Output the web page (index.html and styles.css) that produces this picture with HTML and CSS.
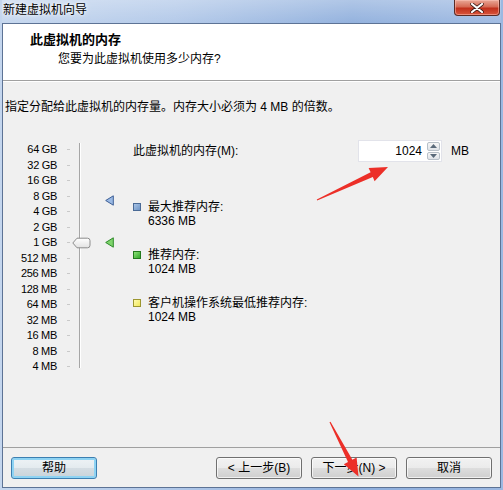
FILE: index.html
```html
<!DOCTYPE html>
<html lang="zh-CN">
  <head>
    <meta charset="UTF-8" />
    <title>新建虚拟机向导</title>
    <link rel="stylesheet" href="styles.css">
  </head>
  <body>
    <div class="window">
      <div class="titlebar">
        <span class="title">新建虚拟机向导</span>
        <div class="close">
          <svg width="14" height="10" viewBox="0 0 14 10">
            <path d="M2 1 L12 9 M12 1 L2 9" stroke="#3a1a16" stroke-width="3.6" stroke-linecap="round" />
            <path d="M2 1 L12 9 M12 1 L2 9" stroke="#fff" stroke-width="2.2" stroke-linecap="round" />
          </svg>
        </div>
      </div>

      <div class="client">
        <div class="header">
          <div class="header-title">此虚拟机的内存</div>
          <div class="header-sub">您要为此虚拟机使用多少内存?</div>
        </div>

        <div class="content">
          <p class="intro">指定分配给此虚拟机的内存量。内存大小必须为 4 MB 的倍数。</p>

          <div class="main">
            <div class="scale">
              <div class="labels">
                <div>64 GB</div>
                <div>32 GB</div>
                <div>16 GB</div>
                <div>8 GB</div>
                <div>4 GB</div>
                <div>2 GB</div>
                <div>1 GB</div>
                <div>512 MB</div>
                <div>256 MB</div>
                <div>128 MB</div>
                <div>64 MB</div>
                <div>32 MB</div>
                <div>16 MB</div>
                <div>8 MB</div>
                <div>4 MB</div>
              </div>
              <div class="track">
                <div class="ticks">
                  <div></div><div></div><div></div><div></div><div></div>
                  <div></div><div></div><div></div><div></div><div></div>
                  <div></div><div></div><div></div><div></div><div></div>
                </div>
                <div class="rail"></div>

                <svg class="thumb" width="19" height="12" viewBox="0 0 19 12">
                  <defs>
                    <linearGradient id="thumbFill" x1="0" y1="0" x2="0" y2="1">
                      <stop offset="0" stop-color="#ffffff" />
                      <stop offset="1" stop-color="#e2e2e2" />
                    </linearGradient>
                  </defs>
                  <path d="M0.8 6 L5 1.2 H15.5 Q18 1.2 18 3.7 V8.3 Q18 10.8 15.5 10.8 H5 Z" fill="url(#thumbFill)" stroke="#8c8c8c" />
                </svg>

                <svg class="marker marker-max" width="9" height="11" viewBox="0 0 9 11">
                  <path d="M0.7 5.5 L8.3 0.8 V10.2 Z" fill="#9ab9e4" stroke="#3e5f95" />
                </svg>
                <svg class="marker marker-rec" width="9" height="11" viewBox="0 0 9 11">
                  <path d="M0.7 5.5 L8.3 0.8 V10.2 Z" fill="#7fd46c" stroke="#2e8a2a" />
                </svg>
              </div>
            </div>

            <div class="info">
              <div class="mem-row">
                <span class="mem-label">此虚拟机的内存(M):</span>
                <div class="spin">
                  <span class="spin-value">1024</span>
                  <div class="spin-buttons">
                    <div class="spin-btn">
                      <svg width="7" height="4" viewBox="0 0 7 4"><path d="M0 4 L3.5 0 L7 4 Z" fill="#5a6a7a" /></svg>
                    </div>
                    <div class="spin-btn">
                      <svg width="7" height="4" viewBox="0 0 7 4"><path d="M0 0 L3.5 4 L7 0 Z" fill="#5a6a7a" /></svg>
                    </div>
                  </div>
                </div>
                <span class="unit">MB</span>
              </div>

              <div class="legend">
                <div class="legend-item">
                  <span class="swatch swatch-blue"></span>
                  <div>
                    <div>最大推荐内存:</div>
                    <div>6336 MB</div>
                  </div>
                </div>
                <div class="legend-item">
                  <span class="swatch swatch-green"></span>
                  <div>
                    <div>推荐内存:</div>
                    <div>1024 MB</div>
                  </div>
                </div>
                <div class="legend-item">
                  <span class="swatch swatch-yellow"></span>
                  <div>
                    <div>客户机操作系统最低推荐内存:</div>
                    <div>1024 MB</div>
                  </div>
                </div>
              </div>
            </div>
          </div>
        </div>

        <div class="footer">
          <button class="btn btn-default">帮助</button>
          <div class="footer-nav">
            <button class="btn">&lt; 上一步(B)</button>
            <button class="btn">下一步(N) &gt;</button>
            <button class="btn">取消</button>
          </div>
        </div>
      </div>

      <!-- red annotation arrows drawn over the dialog -->
      <svg class="annotations" width="503" height="490" viewBox="0 0 503 490">
        <polygon points="317.2,200.6 372.8,176.9 374.6,181.2 388,167 368.6,168.1 370.6,172.3 316.8,199.4" fill="#ec2f28" />
        <polygon points="329.5,422.2 348.0,462.1 343.8,464.3 358.5,476.5 356.6,457.5 352.4,459.8 330.5,421.8" fill="#ec2f28" />
      </svg>
    </div>
  </body>
</html>
```

FILE: styles.css
```css
* {
  box-sizing: border-box;
}

body {
  margin: 0;
  font-family: "Liberation Sans", "Noto Sans CJK SC", sans-serif;
  font-size: 12px;
  line-height: 16px;
  color: #000;
  background: #fff;
}

.window {
  position: relative;
  width: 503px;
  height: 490px;
  display: flex;
  flex-direction: column;
  padding: 0 2px 2px;
  background: linear-gradient(to right, #c4d6ee 0%, #b0c7e8 35%, #8eaedc 70%, #9cb8e1 100%);
}

.titlebar {
  height: 23px;
  display: flex;
  align-items: flex-start;
  justify-content: space-between;
  padding-left: 1px;
  background: linear-gradient(to bottom, rgba(255, 255, 255, 0.3), rgba(255, 255, 255, 0.05));
}

.title {
  margin-top: 2px;
  text-shadow: 0 0 6px rgba(255, 255, 255, 0.9), 0 0 3px rgba(255, 255, 255, 0.9);
}

.close {
  width: 46px;
  height: 16px;
  margin-right: 1px;
  display: flex;
  align-items: center;
  justify-content: center;
  border: 1px solid #5a2a24;
  border-top: none;
  border-radius: 0 0 4px 4px;
  background: linear-gradient(to bottom, #e9a897 0%, #d66a55 45%, #c1301c 55%, #d8553c 100%);
  box-shadow: inset 0 0 0 1px rgba(255, 200, 190, 0.5);
}

.client {
  flex: 1;
  display: flex;
  flex-direction: column;
  border: 1px solid #5d7395;
  background: #f0f0f0;
}

.header {
  height: 57px;
  padding-top: 8px;
  background: #fff;
  border-bottom: 1px solid #a0a0a0;
}

.header-title {
  padding-left: 27px;
  font-size: 13px;
  font-weight: bold;
}

.header-sub {
  margin-top: 3px;
  padding-left: 55px;
}

.content {
  flex: 1;
  border-top: 1px solid #fff;
  padding: 17px 2px 0;
}

.intro {
  margin: 0;
}

.main {
  display: flex;
  margin-top: 25px;
}

.scale {
  display: flex;
  width: 128px;
  padding-top: 2px;
}

.labels {
  width: 52px;
  text-align: right;
  font-size: 11px;
  letter-spacing: -0.3px;
  color: #000;
}

.labels div {
  height: 15.5px;
  line-height: 15.5px;
}

.track {
  position: relative;
  flex: 1;
  display: flex;
  align-items: flex-start;
}

.ticks {
  width: 3px;
  margin-left: 10px;
}

.ticks div {
  height: 15.5px;
  display: flex;
  align-items: center;
}

.ticks div::before {
  content: "";
  width: 3px;
  height: 1px;
  background: #c9c9c9;
}

.rail {
  width: 2px;
  height: 225px;
  margin-top: 1px;
  margin-left: 9px;
  border-left: 1px solid #a6a6a6;
  background: #fff;
}

.thumb {
  position: absolute;
  left: 15px;
  top: 95px;
}

.marker {
  position: absolute;
  left: 48px;
}

.marker-max {
  top: 53px;
}

.marker-rec {
  top: 95px;
}

.info {
  flex: 1;
}

.mem-row {
  display: flex;
  align-items: center;
  height: 22px;
}

.mem-label {
  width: 225px;
}

.spin {
  width: 84px;
  height: 22px;
  display: flex;
  background: #fff;
  border: 1px solid #e2e3ea;
}

.spin-value {
  flex: 1;
  text-align: right;
  padding-right: 4px;
  line-height: 20px;
}

.spin-buttons {
  width: 15px;
  display: flex;
  flex-direction: column;
  padding: 1px;
  gap: 1px;
}

.spin-btn {
  flex: 1;
  display: flex;
  align-items: center;
  justify-content: center;
  border: 1px solid #b8c0c8;
  border-radius: 2px;
  background: linear-gradient(to bottom, #f6f6f6, #dfe3e8);
}

.unit {
  margin-left: 9px;
}

.legend {
  margin-top: 38px;
  display: flex;
  flex-direction: column;
  gap: 20px;
  line-height: 14px;
}

.legend-item {
  display: flex;
  align-items: flex-start;
}

.swatch {
  width: 8px;
  height: 8px;
  margin-top: 3px;
  margin-right: 7px;
  border: 1px solid;
}

.swatch-blue {
  background: linear-gradient(135deg, #a9c4e6, #6f95c6);
  border-color: #4a6a96;
}

.swatch-green {
  background: linear-gradient(135deg, #8fe27a, #32a82a);
  border-color: #237a1e;
}

.swatch-yellow {
  background: linear-gradient(135deg, #fffbb0, #f1e85a);
  border-color: #9c9630;
}

.footer {
  height: 40px;
  display: flex;
  justify-content: space-between;
  align-items: flex-start;
  padding: 9px 8px 0;
  border-top: 1px solid #a0a0a0;
}

.footer-nav {
  display: flex;
  gap: 9px;
}

.btn {
  width: 86px;
  height: 22px;
  padding: 0;
  font-family: inherit;
  font-size: 12px;
  line-height: 20px;
  color: #000;
  border: 1px solid #707070;
  border-radius: 3px;
  background: linear-gradient(to bottom, #f2f2f2 0%, #ebebeb 48%, #dddddd 52%, #cfcfcf 100%);
  box-shadow: inset 0 0 0 1px rgba(255, 255, 255, 0.7);
}

.btn-default {
  border-color: #3c7fb1;
  background: linear-gradient(to bottom, #eef3f6 0%, #e4ebef 48%, #d4dde3 52%, #c9d3d9 100%);
  box-shadow: inset 0 0 0 2px #8ed3f3;
}

.annotations {
  position: absolute;
  left: 0;
  top: 0;
  pointer-events: none;
}
```
